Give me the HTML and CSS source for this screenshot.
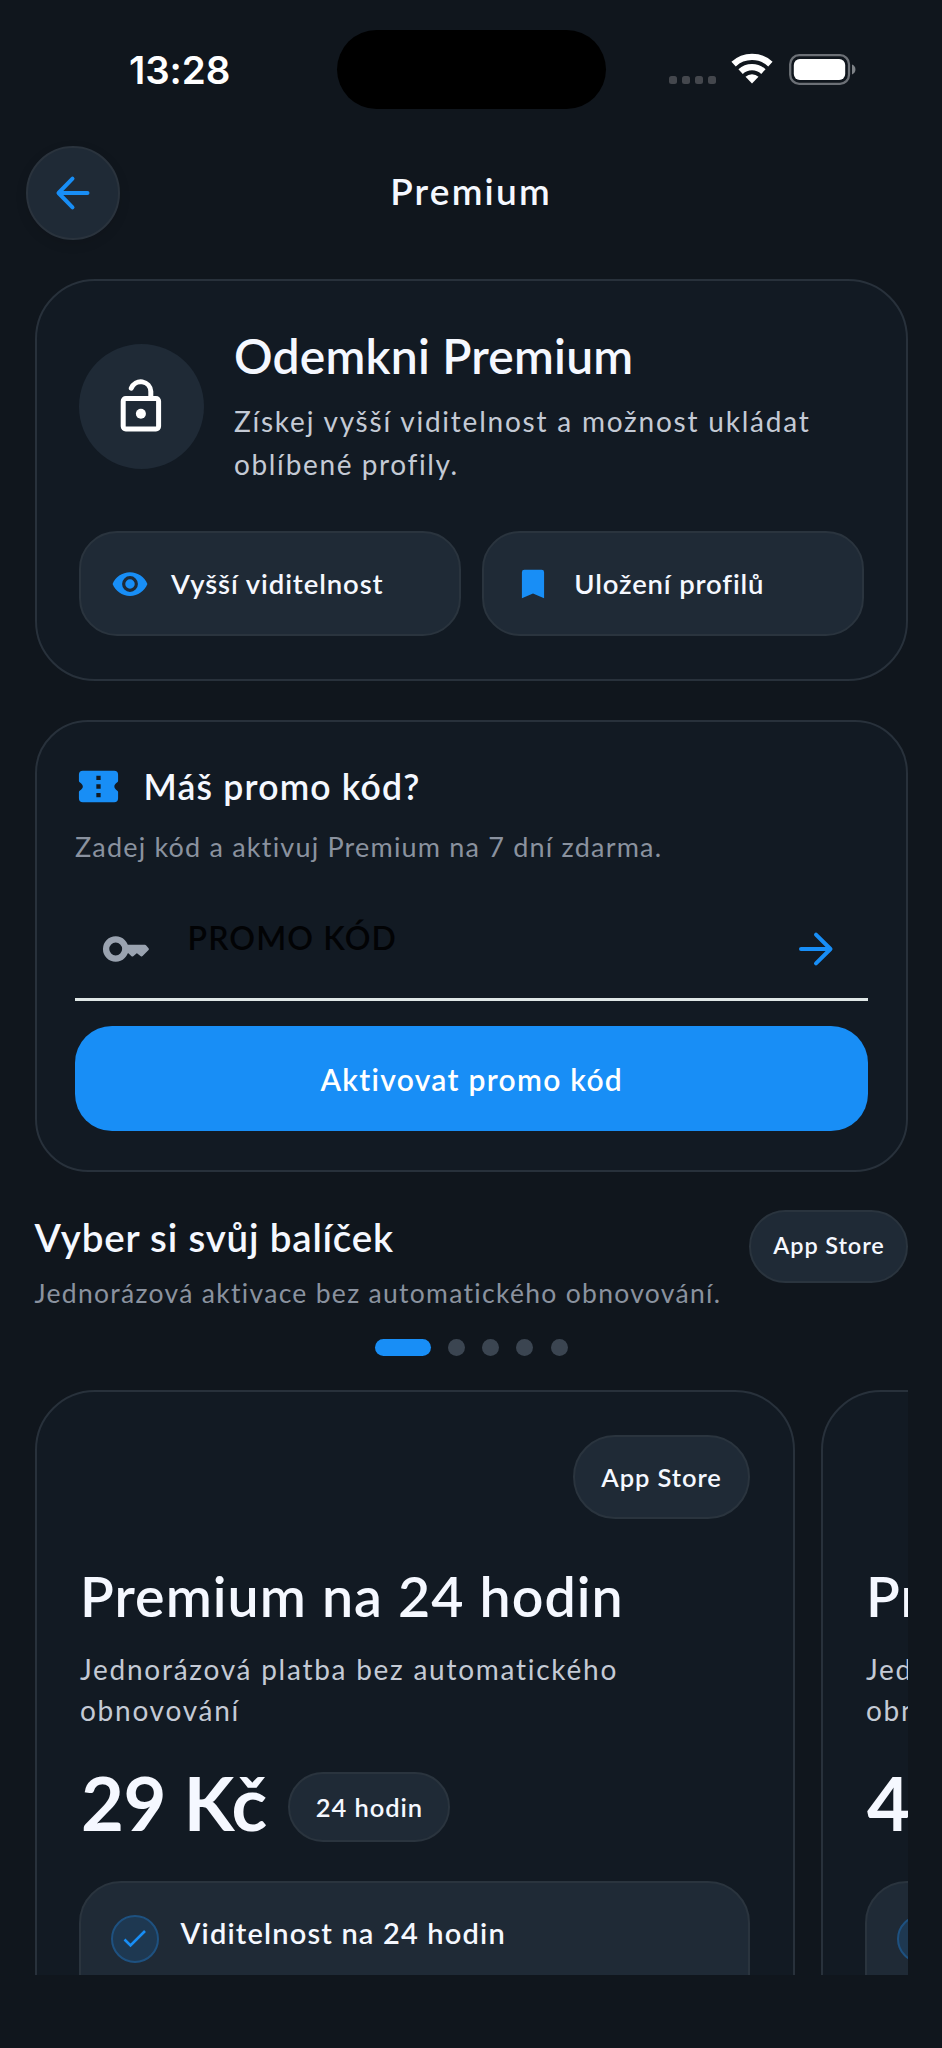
FILE: index.html
```html
<!DOCTYPE html>
<html lang="cs">
<head>
<meta charset="utf-8">
<title>Premium</title>
<link rel="stylesheet" href="styles.css">
</head>
<body>
<div class="screen">
  <div class="status">
    <span class="time">13:28</span>
    <span class="island"></span>
    <span class="signal"><i></i><i></i><i></i><i></i></span>
    <svg class="wifi" width="42" height="32" viewBox="0 0 42 32"><g fill="none" stroke="#fff" stroke-width="6.4"><path d="M2.6 11.1A27 27 0 0 1 39.4 11.1"/><path d="M9.6 18.6A16.7 16.7 0 0 1 32.4 18.6"/></g><path fill="#fff" d="M14.5 23.7A9.7 9.7 0 0 1 27.5 23.7L21 30.6Z"/></svg>
    <svg class="battery" width="68" height="31" viewBox="0 0 68 31"><rect x="1.2" y="1.2" width="58.8" height="28.6" rx="9" fill="none" stroke="#6c7076" stroke-width="2.3"/><rect x="4.8" y="5" width="51.4" height="21" rx="6" fill="#fff"/><path d="M63 10.6C67.600 12 67.600 19 63 20.4Z" fill="#7e8287"/></svg>
  </div>

  <header class="header">
    <button class="back" aria-label="Zpět"><svg width="38" height="38" viewBox="0 0 38 38"><path class="arrow" d="M33.5 19H5M18.5 4.7 4.5 19l14 14.3"/></svg></button>
    <h1 class="title">Premium</h1>
  </header>

  <main class="content">
    <section class="card hero">
      <div class="hero-top">
        <span class="lock"><svg width="60" height="60" viewBox="0 0 60 60" fill="none" stroke="#fff" stroke-width="5"><rect x="12.2" y="21.6" width="35.4" height="30.3" rx="2.6"/><path stroke-linecap="round" d="M20.3 11.2A10.1 10.1 0 0 1 39.8 14.4V20"/><circle cx="29.9" cy="36.8" r="5" fill="#fff" stroke="none"/></svg></span>
        <div class="hero-text">
          <h2>Odemkni Premium</h2>
          <p><span class="l1">Získej vyšší viditelnost a možnost ukládat</span> <span class="l2">oblíbené profily.</span></p>
        </div>
      </div>
      <div class="chips">
        <div class="chip"><svg width="38" height="38" viewBox="0 0 24 24"><path d="M12 4.5C7 4.5 2.7 7.6 1 12c1.700 4.400 6 7.500 11 7.500s9.300-3.100 11-7.500c-1.700-4.400-6-7.500-11-7.500zM12 17a5 5 0 1 1 0-10 5 5 0 0 1 0 10zm0-8a3 3 0 1 0 0 6 3 3 0 0 0 0-6z"/></svg><span class="c1">Vyšší viditelnost</span></div>
        <div class="chip"><svg width="38" height="38" viewBox="0 0 24 24"><path d="M6.500 3h11A1.500 1.500 0 0 1 19 4.500V21l-7-3-7 3V4.500A1.500 1.500 0 0 1 6.500 3z"/></svg><span class="c2">Uložení profilů</span></div>
      </div>
    </section>

    <section class="card promo">
      <div class="promo-head">
        <svg width="47" height="47" viewBox="0 0 24 24"><path fill="#188ef6" fill-rule="evenodd" d="M4 4h16a2 2 0 0 1 2 2v3.300c-.2.600-1.900 1.300-1.900 2.700s1.700 2.100 1.900 2.700V18a2 2 0 0 1-2 2H4a2 2 0 0 1-2-2v-3.300c.2-.600 2-1.300 2-2.700S2.200 9.900 2 9.300V6a2 2 0 0 1 2-2zm6.900 2.500v2.200h2.200V6.500zm0 4.400v2.200h2.200v-2.200zm0 4.400v2.200h2.200v-2.200z"/></svg>
        <h3>Máš promo kód?</h3>
      </div>
      <p class="promo-sub">Zadej kód a aktivuj Premium na 7 dní zdarma.</p>
      <div class="field">
        <svg width="50" height="50" viewBox="0 0 50 50"><circle cx="14.700" cy="25" r="9.600" fill="none" stroke="#9aa3b0" stroke-width="6.300"/><path d="M25 22H44l2.600 3-6 6.200-4.800-3.800-4.400 3.800L28 28H25z" fill="#9aa3b0" stroke="#9aa3b0" stroke-width="2.600" stroke-linejoin="round"/></svg>
        <span class="field-text">PROMO KÓD</span>
        <svg width="38" height="38" viewBox="0 0 38 38"><path class="arrow" d="M4 19H33M19 4.700 33.500 19 19 33.300"/></svg>
      </div>
      <button class="cta">Aktivovat promo kód</button>
    </section>

    <section class="packages">
      <div class="pack-head">
        <div>
          <h3>Vyber si svůj balíček</h3>
          <p>Jednorázová aktivace bez automatického obnovování.</p>
        </div>
        <span class="pill store">App Store</span>
      </div>
      <div class="dots"><i class="on"></i><i></i><i></i><i></i><i></i></div>
      <div class="carousel">
        <article class="plan">
          <span class="pill badge">App Store</span>
          <h2>Premium na 24 hodin</h2>
          <p>Jednorázová platba bez automatického obnovování</p>
          <div class="price-row"><strong>29 Kč</strong><span class="pill term">24 hodin</span></div>
          <div class="features">
            <span class="check"><svg width="24" height="20" viewBox="0 0 24 20"><path d="M1.500 10.500 7.500 16.500 22 2"/></svg></span>
            <span>Viditelnost na 24 hodin</span>
          </div>
        </article>
        <article class="plan">
          <span class="pill badge">App Store</span>
          <h2>Premium na 48 hodin</h2>
          <p>Jednorázová platba bez automatického obnovování</p>
          <div class="price-row"><strong>49 Kč</strong><span class="pill term">48 hodin</span></div>
          <div class="features">
            <span class="check"><svg width="24" height="20" viewBox="0 0 24 20"><path d="M1.500 10.500 7.500 16.500 22 2"/></svg></span>
            <span>Viditelnost na 48 hodin</span>
          </div>
        </article>
      </div>
    </section>
  </main>
</div>
</body>
</html>
```
FILE: styles.css
```css
* { box-sizing: border-box; margin: 0; padding: 0; }
body { background: #10161d; font-family: Lato, "Open Sans", sans-serif; color: #f5f8ff; }
.screen { width: 942px; height: 2048px; overflow: hidden; }
svg { display: block; flex: none; }
button { border: 0; font: inherit; color: inherit; }
h1, h2, h3 { font-weight: 600; white-space: nowrap; }
.arrow { fill: none; stroke: #188ef6; stroke-width: 4; stroke-linecap: round; stroke-linejoin: round; }

.status { display: flex; align-items: center; height: 139px; padding-left: 129px; }
.time { width: 208px; font: 600 38.500px/46px Inter, sans-serif; letter-spacing: -.100px; color: #fff; }
.island { width: 269px; height: 79px; border-radius: 40px; background: #000; }
.signal { display: flex; gap: 5px; margin: 21px 0 0 63px; }
.signal i { width: 8px; height: 8px; border-radius: 2.500px; background: #44474d; }
.wifi { margin: 0 0 1px 15px; }
.battery { margin: 0 0 1px 16px; }

.header { display: grid; grid-template-columns: 94px 1fr 94px; align-items: center; height: 107px; padding: 0 26px; }
.back { display: grid; place-items: center; width: 94px; height: 94px; border: 2px solid #2a333d; border-radius: 50%; background: #1f2a36; box-shadow: 0 4px 12px rgba(0, 0, 0, .1); }
.title { padding-bottom: 4px; text-align: center; font-size: 37px; line-height: 46px; letter-spacing: 2.200px; }

.content { padding: 33px 34px 0 34.500px; }
.card { border: 2px solid #28313b; background: #121a23; }
.hero { height: 402px; padding: 46px 42px 0; border-radius: 60px; }
.hero-top { display: flex; align-items: center; gap: 30.500px; }
.lock { display: grid; place-items: center; flex: none; width: 125px; height: 125px; border-radius: 50%; background: #1f2a36; }
.hero-text h2 { margin-bottom: 15px; font-size: 48px; line-height: 58px; letter-spacing: .200px; }
.hero-text p { font-size: 28px; line-height: 43px; color: #c4cad5; }
.l1 { letter-spacing: 1.780px; white-space: nowrap; }
.l2 { letter-spacing: 1.600px; }
.chips { display: grid; grid-template-columns: 1fr 1fr; gap: 21px; margin-top: 45px; }
.chip { display: flex; align-items: center; gap: 22px; height: 105px; padding: 0 30.500px; border: 2px solid #2a343e; border-radius: 38px; background: #1f2a36; font-size: 27.500px; line-height: 34px; font-weight: 600; }
.chip svg { fill: #188ef6; }
.c1 { letter-spacing: .900px; }
.c2 { letter-spacing: .850px; }

.promo { height: 452px; margin-top: 39px; padding: 41px 38px 0; border-radius: 53px; }
.promo-head { display: flex; align-items: center; gap: 22px; height: 47px; }
.promo-head h3 { font-size: 35.500px; line-height: 44px; letter-spacing: 1.200px; }
.promo-sub { margin-top: 20px; padding-left: .500px; font-size: 27px; line-height: 34px; letter-spacing: 1.190px; color: #8a929f; white-space: nowrap; }
.field { display: flex; align-items: center; height: 101px; margin-top: 36px; padding: 0 33px 0 26px; border-bottom: 3px solid #dfe7e6; }
.field-text { flex: 1; margin: 0 0 22px 37px; font-size: 32px; line-height: 40px; font-weight: 600; letter-spacing: 1.120px; color: #020305; }
.cta { display: block; width: 100%; height: 105px; margin-top: 25px; border-radius: 37px; background: #188ef6; font-size: 30px; line-height: 38px; font-weight: 600; letter-spacing: 1.290px; text-indent: 1px; color: #fff; }

.packages { margin-top: 38px; }
.pack-head { display: flex; justify-content: space-between; align-items: flex-start; height: 100px; }
.pack-head h3 { padding-top: 3px; font-size: 38.500px; line-height: 48px; letter-spacing: .800px; }
.pack-head p { margin-top: 15px; font-size: 26.500px; line-height: 34px; letter-spacing: 1.300px; color: #8a929f; white-space: nowrap; }
.pill { display: flex; align-items: center; justify-content: center; flex: none; border: 2px solid #2a343e; background: #1f2a36; font-weight: 600; white-space: nowrap; }
.store { width: 159px; height: 73px; padding: 0 0 4px 1px; border-radius: 37px; font-size: 23.500px; letter-spacing: .880px; }
.dots { display: flex; justify-content: center; gap: 17.200px; margin-top: 29px; }
.dots i { width: 17px; height: 17px; border-radius: 9px; background: #3b4551; }
.dots .on { width: 56px; background: #188ef6; }

.carousel { display: flex; gap: 26px; height: 585px; margin-top: 34px; overflow: hidden; }
.plan { flex: none; width: 760px; height: 760px; padding: 43px 43px 0 42.500px; border: 2px solid #28313b; border-radius: 60px; background: #121a23; }
.badge { width: 177px; height: 84px; margin-left: auto; padding-left: 1px; border-radius: 42px; font-size: 25.500px; letter-spacing: .910px; }
.plan h2 { margin-top: 44px; padding-left: 1px; font-size: 55.500px; line-height: 66px; letter-spacing: 1.080px; }
.plan p { margin-top: 20px; padding-left: 1px; font-size: 28px; line-height: 40.500px; letter-spacing: 1.740px; color: #c4cad5; }
.price-row { display: flex; align-items: center; gap: 21px; height: 90px; margin-top: 26px; }
.price-row strong { padding: 4px 0 0 2px; font-size: 74px; line-height: 90px; font-weight: 700; letter-spacing: -.330px; white-space: nowrap; }
.term { width: 162px; height: 70px; margin-top: 12px; padding-left: 1px; border-radius: 35px; font-size: 25.500px; letter-spacing: .930px; }
.features { display: flex; align-items: flex-start; gap: 21.500px; height: 300px; margin-top: 35px; padding: 32px 30px; border: 2px solid #2a343e; border-radius: 42px; background: #1f2a36; font-size: 29px; line-height: 36px; font-weight: 600; letter-spacing: 1.170px; white-space: nowrap; }
.check { display: grid; place-items: center; flex: none; width: 48px; height: 48px; border: 2px solid #1e5180; border-radius: 50%; background: #1e3851; }
.check path { fill: none; stroke: #188ef6; stroke-width: 2.600; }
```
